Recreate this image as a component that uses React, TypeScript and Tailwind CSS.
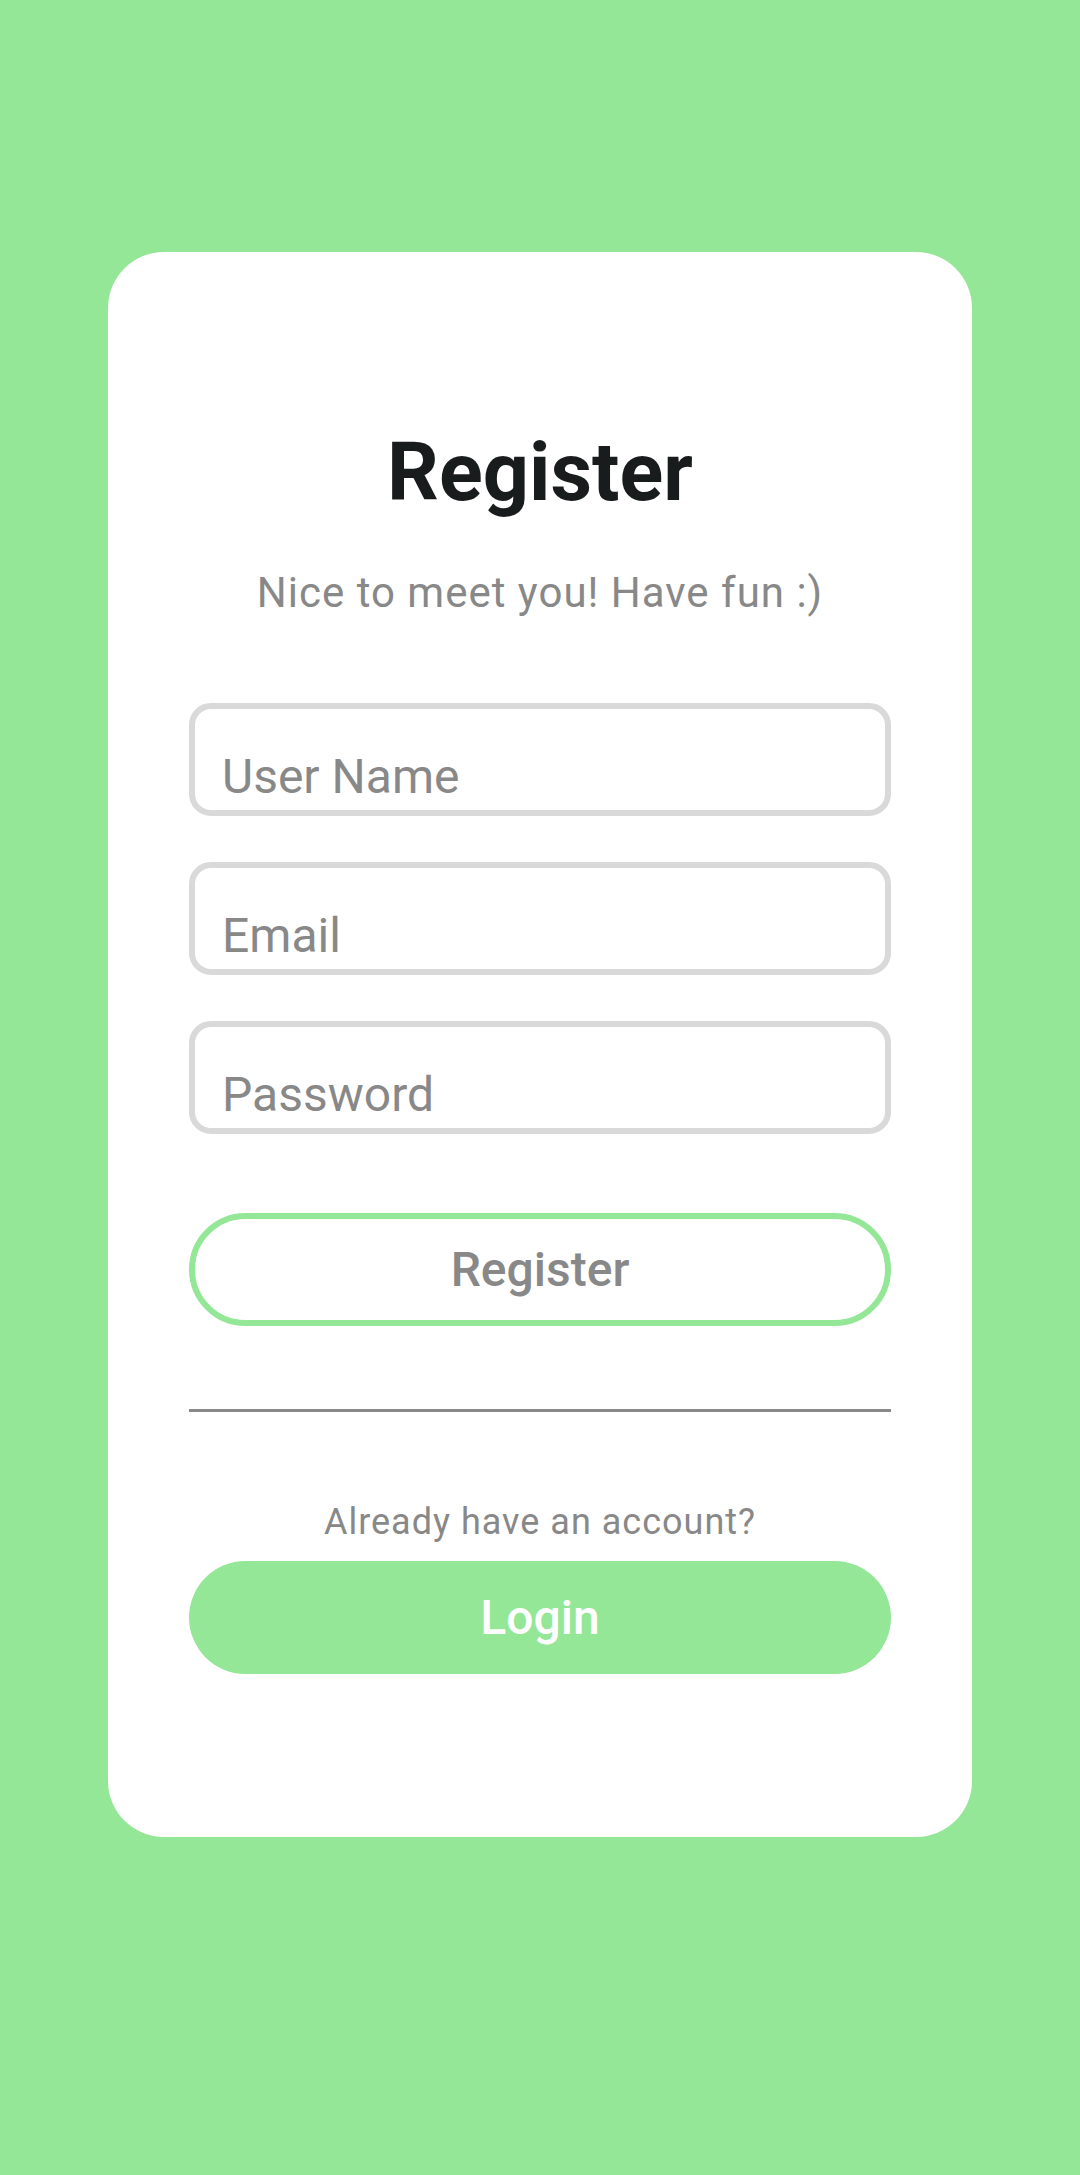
import React from "react";

const fields = [
  { id: "username", label: "User Name", type: "text" },
  { id: "email", label: "Email", type: "email" },
  { id: "password", label: "Password", type: "password" },
];

export default function App() {
  return (
    <main className="flex min-h-screen flex-col items-center bg-[#93E796] px-[108px] pt-[252px] pb-[252px] font-[Roboto,sans-serif]">
      <form
        className="flex w-full flex-col items-center rounded-[56px] bg-white px-[81px] pt-[181px] pb-[163px]"
        onSubmit={(e) => e.preventDefault()}
      >
        <h1 className="text-[81px] leading-[80px] font-bold text-[#191C1D]">Register</h1>
        <p className="mt-[56px] text-[42px] leading-[48px] tracking-[1px] text-[#888888]">
          Nice to meet you! Have fun :)
        </p>
        <div className="mt-[86px] flex w-full flex-col gap-[46px]">
          {fields.map((f) => (
            <input
              key={f.id}
              id={f.id}
              type={f.type}
              aria-label={f.label}
              placeholder={f.label}
              className="h-[113px] w-full rounded-[22px] border-[6px] border-[#D9D9D9] px-[27px] pt-[34px] text-[48px] leading-[56px] placeholder:text-[#888888] placeholder:opacity-100"
            />
          ))}
        </div>
        <button
          type="submit"
          className="mt-[79px] h-[113px] w-full rounded-full border-[6px] border-[#93E796] text-[48px] leading-[56px] font-medium text-[#888888]"
        >
          Register
        </button>
        <hr className="mt-[83px] w-full border-t-[3px] border-[#888888]" />
        <p className="mt-[86px] text-[36px] leading-[48px] tracking-[1px] text-[#888888]">
          Already have an account?
        </p>
        <button
          type="button"
          className="mt-[15px] h-[113px] w-full rounded-full bg-[#93E796] text-[48px] leading-[56px] font-medium text-white"
        >
          Login
        </button>
      </form>
    </main>
  );
}
